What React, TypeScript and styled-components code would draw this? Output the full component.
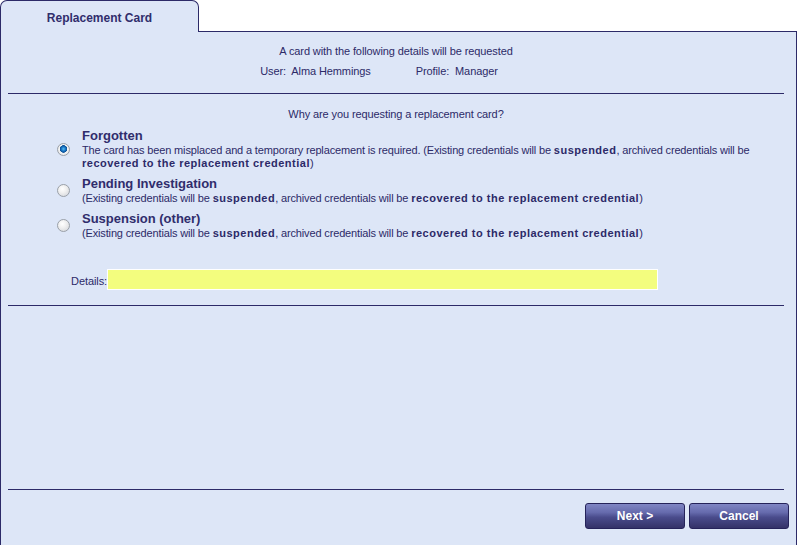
import styled, { createGlobalStyle } from 'styled-components';

const GlobalStyle = createGlobalStyle`
	html, body {
		margin: 0;
		padding: 0;
		background: #ffffff;
	}
	body {
		font-family: 'Liberation Sans', Arial, sans-serif;
		font-size: 11px;
		letter-spacing: -0.1px;
		color: #2c2a68;
	}
`;

interface Reason {
	id: string;
	title: string;
	lead?: string;
	checked?: boolean;
}

const reasons: Reason[] = [
	{
		id: 'forgotten',
		title: 'Forgotten',
		lead: 'The card has been misplaced and a temporary replacement is required. ',
		checked: true,
	},
	{ id: 'pending', title: 'Pending Investigation' },
	{ id: 'suspension', title: 'Suspension (other)' },
];

export default function App() {
	return (
		<>
			<GlobalStyle />
			<Page>
				<TabRow>
					<Tab>Replacement Card</Tab>
					<TabFiller />
				</TabRow>
				<Panel>
					<Summary>
						<SummaryLine>A card with the following details will be requested</SummaryLine>
						<SummaryFields>
							<span>User:&nbsp; Alma Hemmings</span>
							<span>Profile:&nbsp; Manager</span>
						</SummaryFields>
					</Summary>
					<Rule />
					<Question>Why are you requesting a replacement card?</Question>
					<Options>
						{reasons.map((r) => (
							<Option key={r.id}>
								<Radio checked={!!r.checked} />
								<OptionText>
									<OptionTitle>{r.title}</OptionTitle>
									<OptionDesc>
										{r.lead}
										(Existing credentials will be <Strong>suspended</Strong>, archived credentials will be
										{r.lead ? <br /> : ' '}
										<Strong>recovered to the replacement credential</Strong>)
									</OptionDesc>
								</OptionText>
							</Option>
						))}
					</Options>
					<DetailsRow>
						<DetailsLabel>Details:</DetailsLabel>
						<DetailsInput type="text" />
					</DetailsRow>
					<Rule />
					<Spacer />
					<Rule />
					<ButtonRow>
						<Button>Next &gt;</Button>
						<Button>Cancel</Button>
					</ButtonRow>
				</Panel>
			</Page>
		</>
	);
}

const navy = '#2c2a68';

const Page = styled.div`
	width: 797px;
	height: 545px;
	display: flex;
	flex-direction: column;
`;

const TabRow = styled.div`
	display: flex;
	height: 32px;
`;

const Tab = styled.div`
	width: 199px;
	box-sizing: border-box;
	border: 1px solid ${navy};
	border-bottom: none;
	border-radius: 7px 7px 0 0;
	background: #dde6f7;
	font-size: 12px;
	font-weight: bold;
	letter-spacing: 0;
	display: flex;
	justify-content: center;
	padding-top: 10px;
	color: #302d6c;
`;

const TabFiller = styled.div`
	flex: 1;
	border-bottom: 1px solid ${navy};
`;

const Panel = styled.div`
	flex: 1;
	display: flex;
	flex-direction: column;
	background: #dde6f7;
	border-left: 1px solid ${navy};
	border-right: 1px solid ${navy};
	padding: 0 12px 0 7px;
`;

const Summary = styled.div`
	display: flex;
	flex-direction: column;
	align-items: center;
	padding-top: 12px;
	gap: 6px;
`;

const SummaryLine = styled.div`
	line-height: 14px;
`;

const SummaryFields = styled.div`
	display: flex;
	gap: 45px;
	line-height: 14px;
	margin-right: 34px;
`;

const Rule = styled.div`
	height: 1px;
	background: ${navy};
	margin-top: 15px;

	&:first-of-type {
		margin-top: 14px;
	}
`;

const Question = styled.div`
	text-align: center;
	line-height: 14px;
	margin-top: 13px;
`;

const Options = styled.div`
	display: flex;
	flex-direction: column;
	gap: 6px;
	margin-top: 7px;
	padding-left: 49px;
`;

const Option = styled.div`
	display: flex;
	align-items: center;
	gap: 12px;
`;

const Radio = styled.span<{ checked: boolean }>`
	width: 13px;
	height: 13px;
	flex: none;
	box-sizing: border-box;
	border-radius: 50%;
	border: 1px solid #9aa0a8;
	background: ${({ checked }) =>
		checked
			? 'radial-gradient(circle at 50% 45%, #5cc0f0 0, #1a78c8 2px, #0c4f94 3.5px, #f4f4f4 4px, #d8dbe0 100%)'
			: 'radial-gradient(circle at 40% 35%, #ffffff 0, #f0f0f0 40%, #cfd2d8 100%)'};
`;

const OptionText = styled.div`
	display: flex;
	flex-direction: column;
`;

const OptionTitle = styled.div`
	font-size: 13px;
	font-weight: bold;
	letter-spacing: 0;
	line-height: 16px;
	color: #302d6c;
`;

const OptionDesc = styled.div`
	line-height: 13px;
	letter-spacing: -0.15px;
`;

const Strong = styled.b`
	letter-spacing: 0.5px;
`;

const DetailsRow = styled.div`
	display: flex;
	align-items: center;
	margin-top: 29px;
`;

const DetailsLabel = styled.span`
	width: 99px;
	text-align: right;
	padding-top: 3px;
`;

const DetailsInput = styled.input`
	width: 551px;
	height: 21px;
	box-sizing: border-box;
	margin: 0;
	border: 1px solid #ffffff;
	background: #f3fd7e;
	outline: none;
`;

const Spacer = styled.div`
	flex: 1;
`;

const ButtonRow = styled.div`
	display: flex;
	justify-content: flex-end;
	gap: 4px;
	margin: 13px -5px 16px 0;
`;

const Button = styled.button`
	width: 100px;
	height: 26px;
	border: 1px solid #25235a;
	border-radius: 3px;
	background: linear-gradient(#8086c4 0%, #666bad 35%, #4a4c8c 55%, #343268 100%);
	color: #ffffff;
	font-family: 'Liberation Sans', Arial, sans-serif;
	font-size: 12px;
	font-weight: bold;
	padding: 0;
	cursor: pointer;
`;
